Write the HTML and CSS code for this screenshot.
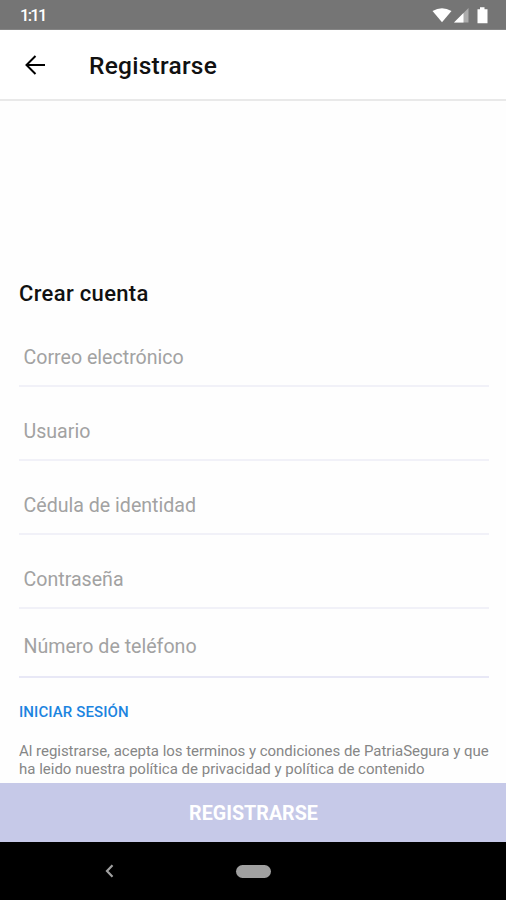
FILE: index.html
```html
<!DOCTYPE html>
<html lang="es">
<head>
<meta charset="utf-8">
<title>Registrarse</title>
<link rel="stylesheet" href="styles.css">
</head>
<body>
<div class="screen">
  <div class="status">
    <span class="clock">1:11</span>
    <svg class="status-icons" width="58" height="20" viewBox="0 0 58 20" fill="#fff">
      <path d="M0.500 5Q10 -0.500 19.500 5L10 16.300Z"/>
      <path d="M36.500 2V16.500H22Z" opacity=".4"/>
      <path d="M31.500 7V16.500H22Z"/>
      <path d="M45.500 3.200H48V1.300H52.500V3.200H55.500V17.300H45.500Z"/>
    </svg>
  </div>
  <header class="appbar">
    <svg class="back" width="20" height="20" viewBox="0 0 20 20" fill="none" stroke="#000" stroke-width="2"><path d="M20 10H2M10.500 1L1.500 10L10.500 19"/></svg>
    <h1 class="title">Registrarse</h1>
  </header>
  <main class="form">
    <h2 class="heading">Crear cuenta</h2>
    <div class="field first">Correo electrónico</div>
    <div class="field">Usuario</div>
    <div class="field">Cédula de identidad</div>
    <div class="field">Contraseña</div>
    <div class="field phone">Número de teléfono</div>
    <a class="login">INICIAR SESIÓN</a>
    <p class="terms">Al registrarse, acepta los terminos y condiciones de PatriaSegura y que<br><span class="terms-end">ha leido nuestra política de privacidad y política de contenido</span></p>
  </main>
  <div class="submit">REGISTRARSE</div>
  <nav class="navbar">
    <svg class="nav-back" width="9" height="14" viewBox="0 0 9 14" fill="none" stroke="#a0a0a0" stroke-width="2.200"><path d="M7.500 1.200L2 7L7.500 12.800"/></svg>
    <div class="home"></div>
  </nav>
</div>
</body>
</html>
```
FILE: styles.css
```css
* { box-sizing: border-box; }
body { margin: 0; font-family: Roboto, sans-serif; background: #fff; }
.screen { width: 506px; height: 900px; display: flex; flex-direction: column; overflow: hidden; white-space: nowrap; }
.status { height: 30px; background: #757575; display: flex; justify-content: space-between; padding: 6px 16px 0 20px; border-bottom: 1px solid #858585; }
.clock { color: #fff; font-size: 16.5px; line-height: 20px; font-weight: 500; letter-spacing: -1.7px; }
.appbar { height: 71px; display: flex; align-items: center; padding-left: 25px; border-bottom: 2px solid #e9e9e9; }
.title { margin: 2px 0 0 44px; font-size: 24.5px; line-height: 30px; font-weight: 500; letter-spacing: 0.25px; color: #111; }
.form { height: 682px; padding: 179px 17px 0 19px; background: #fefefe; }
.heading { margin: 0 0 19px; font-size: 22px; line-height: 28px; font-weight: 500; letter-spacing: 0.33px; color: #111; }
.field { height: 74px; padding: 33px 0 0 4.5px; font-size: 19.6px; line-height: 24px; color: #a2a2a2; border-bottom: 2px solid #f1f1f8; }
.first { height: 60px; padding-top: 19px; }
.phone { height: 69px; padding-top: 26px; border-bottom-color: #e8e8f6; }
.login { display: block; margin-top: 24px; font-size: 15px; line-height: 20px; font-weight: 500; letter-spacing: 0.1px; color: #1c84e0; }
.terms { margin: 20px 0 0; font-size: 15px; line-height: 18px; letter-spacing: -0.03px; color: #868686; }
.terms-end { letter-spacing: 0; }
.submit { height: 59px; padding: 1px 0 0 1px; background: #c6c9e8; color: #fff; display: flex; align-items: center; justify-content: center; font-size: 19.7px; font-weight: 700; }
.navbar { height: 58px; background: #000; display: flex; align-items: center; padding-left: 105px; }
.home { width: 35px; height: 13px; margin-left: 122px; border-radius: 7px; background: #a0a0a0; }
```
